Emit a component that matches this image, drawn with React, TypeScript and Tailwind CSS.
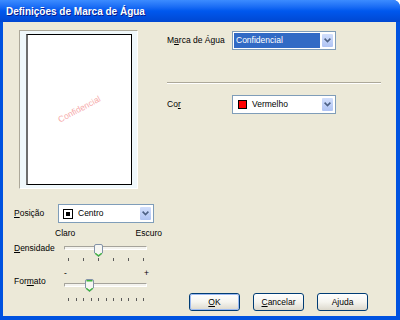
import React from 'react';

/**
 * Windows XP style "Definições de Marca de Água" dialog.
 */

const Chevron: React.FC = () => (
	<svg width="7" height="5" viewBox="0 0 7 5">
		<path d="M0.6 0.6 L3.5 3.5 L6.4 0.6" stroke="#4D6185" strokeWidth="1.6" fill="none" />
	</svg>
);

const Combo: React.FC<{ children: React.ReactNode; className?: string }> = ({ children, className }) => (
	<div className={`flex h-[19px] border border-[#7F9DB9] bg-white ${className ?? ''}`}>
		<div className="flex min-w-0 flex-1 items-center">{children}</div>
		<div className="m-[1px] flex w-[13px] items-center justify-center rounded-[2px] border border-white bg-gradient-to-b from-[#D2DFFC] to-[#AFC3F3]">
			<Chevron />
		</div>
	</div>
);

const Thumb: React.FC<{ focus?: boolean; left: number; top: number }> = ({ focus, left, top }) => (
	<svg
		width="9"
		height="13"
		viewBox="0 0 9 13"
		className="absolute"
		style={{ left, top }}
	>
		<path
			d="M0.5 2 Q0.5 0.5 2 0.5 H7 Q8.5 0.5 8.5 2 V9 L4.5 12.5 L0.5 9 Z"
			fill="#F6F6F2"
			stroke="#8393A8"
		/>
		<path d="M1.3 9.2 L4.5 11.8 L7.7 9.2" stroke="#3FB43F" strokeWidth="1.3" fill="none" />
		{focus && <path d="M1.5 1.8 H7.5" stroke="#3FB43F" strokeWidth="1.4" />}
	</svg>
);

const Track: React.FC = () => (
	<div className="ml-[4px] h-[4px] w-[83px] rounded-[1px] border border-[#A5A39B] border-b-white border-r-white bg-[#F4F3EE]" />
);

const Ticks: React.FC<{ count: number }> = ({ count }) => (
	<div className="ml-[54px] flex h-[3px] w-[76px] justify-between">
		{Array.from({ length: count }).map((_, i) => (
			<span key={i} className="h-[3px] w-[1px] bg-[#5A5A5A]" />
		))}
	</div>
);

const Button: React.FC<{ children: React.ReactNode; isDefault?: boolean }> = ({ children, isDefault }) => (
	<div className="h-[18px] w-[51px] rounded-[3px] border border-[#003C74] bg-gradient-to-b from-white via-[#F5F4EF] to-[#DCD8CC]">
		<div
			className={`flex h-full w-full items-center justify-center rounded-[2px] ${
				isDefault ? 'border border-[#9BB9F2]' : ''
			}`}
		>
			{children}
		</div>
	</div>
);

export default function App() {
	return (
		<div className="flex h-[320px] w-[400px] flex-col overflow-hidden rounded-tr-[7px] bg-[#0052E0] font-['Liberation_Sans',Arial,sans-serif] text-[8.5px] text-black">
			{/* title bar */}
			<div className="flex h-[22px] items-center bg-gradient-to-b from-[#3C8CFF] via-[#0058EE] to-[#0047D2] pl-[6px]">
				<span className="text-[10px] font-bold text-white [text-shadow:1px_1px_0_#0A1D8C]">
					Definições de Marca de Água
				</span>
			</div>

			{/* body */}
			<div className="mb-[4px] ml-[3px] mr-[4px] flex flex-1 flex-col bg-[#ECE9D8]">
				<div className="flex pt-[8px]">
					{/* preview */}
					<div className="ml-[16px] flex h-[159px] w-[119px] border border-[#ACA899] border-b-white border-r-white bg-[#F0F8FB] pb-[3px] pl-[6px] pr-[5px] pt-[3px]">
						<div className="flex flex-1 items-center justify-center border border-black border-l-2 border-l-[#6E6E6E] bg-white">
							<span className="-rotate-[28deg] text-[8.5px] text-[#F6A9A9]">Confidencial</span>
						</div>
					</div>

					{/* right settings */}
					<div className="ml-[29px] flex w-[214px] flex-col">
						<div className="mt-[1px] flex items-center">
							<span className="w-[65px]">
								M<span className="underline">a</span>rca de Água
							</span>
							<Combo className="w-[104px]">
								<div className="ml-[1px] flex h-[15px] flex-1 items-center bg-[#316AC5] pl-[2px] text-white">
									Confidencial
								</div>
							</Combo>
						</div>
						<div className="mt-[32px] h-[2px] border-t border-[#ACA899] border-b border-b-white" />
						<div className="mt-[11px] flex items-center">
							<span className="w-[65px]">
								Co<span className="underline">r</span>
							</span>
							<Combo className="w-[104px]">
								<span className="ml-[5px] h-[9px] w-[9px] border border-black bg-[#FF0000]" />
								<span className="ml-[5px]">Vermelho</span>
							</Combo>
						</div>
					</div>
				</div>

				<div className="flex flex-1">
					{/* left controls */}
					<div className="ml-[11px] flex w-[150px] flex-col">
						<div className="mt-[15px] flex items-center">
							<span className="w-[44px]">
								<span className="underline">P</span>osição
							</span>
							<Combo className="h-[18px] w-[96px]">
								<span className="ml-[4px] flex h-[10px] w-[10px] items-center justify-center border border-black">
									<span className="h-[4px] w-[4px] bg-black" />
								</span>
								<span className="ml-[5px]">Centro</span>
							</Combo>
						</div>

						<div className="ml-[41px] mt-[5px] flex h-[10px] w-[107px] items-center justify-between leading-[10px]">
							<span>Claro</span>
							<span>Escuro</span>
						</div>

						<div className="mt-[3px] flex h-[14px] items-center">
							<span className="w-[46px] leading-[14px]">
								<span className="underline">D</span>ensidade
							</span>
							<div className="relative flex h-[14px] w-[91px] items-center">
								<Track />
								<Thumb left={34} top={3} />
							</div>
						</div>
						<div className="mt-[3px]">
							<Ticks count={6} />
						</div>

						<div className="ml-[50px] mt-[9px] flex h-[6px] w-[85px] items-center justify-between leading-[6px]">
							<span>-</span>
							<span>+</span>
						</div>

						<div className="flex h-[18px] items-start">
							<span className="w-[46px] leading-[10px]">
								For<span className="underline">m</span>ato
							</span>
							<div className="relative flex h-[18px] w-[91px] items-center">
								<Track />
								<Thumb left={25} top={3} focus />
							</div>
						</div>
						<div className="mt-[4px]">
							<Ticks count={11} />
						</div>
					</div>

					{/* buttons */}
					<div className="flex flex-1 items-end justify-end gap-[13px] pb-[5px] pr-[28px]">
						<Button isDefault>
							<span className="underline">O</span>K
						</Button>
						<Button>
							<span>
								<span className="underline">C</span>ancelar
							</span>
						</Button>
						<Button>Ajuda</Button>
					</div>
				</div>
			</div>
		</div>
	);
}
